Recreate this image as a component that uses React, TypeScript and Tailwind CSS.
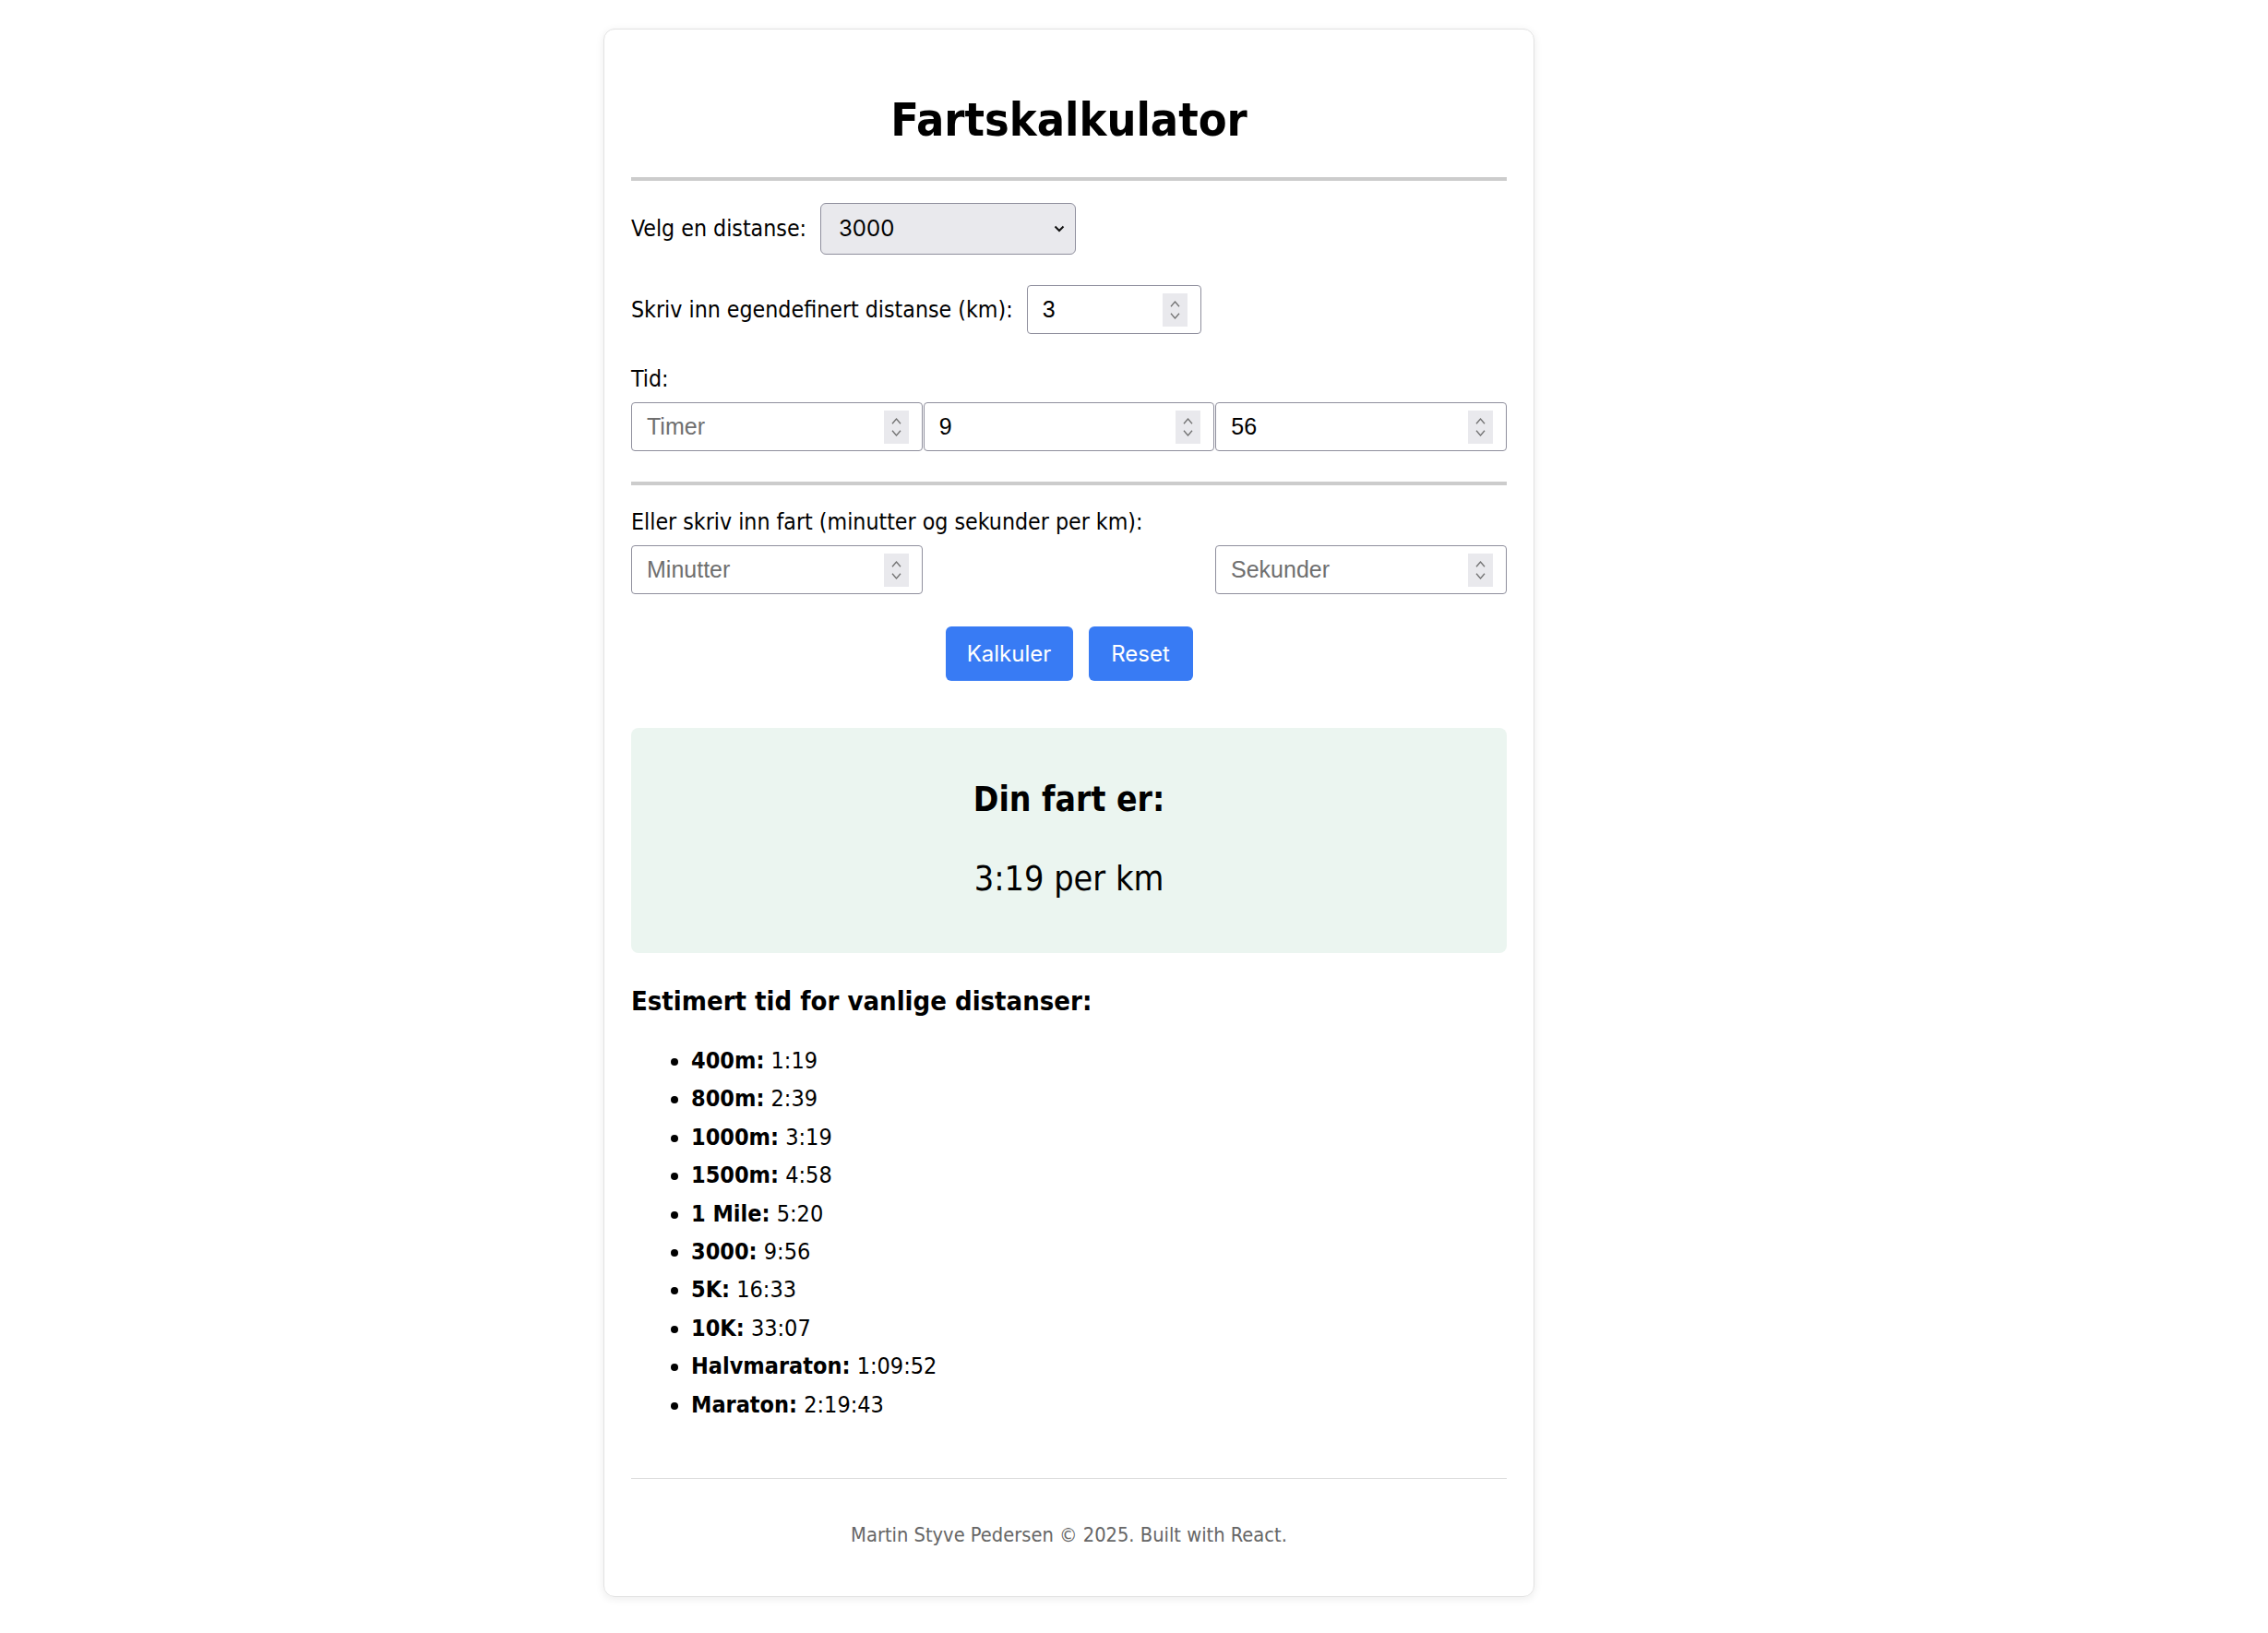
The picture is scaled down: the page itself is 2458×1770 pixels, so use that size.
import React, { FC, useState } from "react";

const results: { label: string; time: string }[] = [
  { label: "400m:", time: "1:19" },
  { label: "800m:", time: "2:39" },
  { label: "1000m:", time: "3:19" },
  { label: "1500m:", time: "4:58" },
  { label: "1 Mile:", time: "5:20" },
  { label: "3000:", time: "9:56" },
  { label: "5K:", time: "16:33" },
  { label: "10K:", time: "33:07" },
  { label: "Halvmaraton:", time: "1:09:52" },
  { label: "Maraton:", time: "2:19:43" },
];

const Spinner: FC = () => (
  <div className="w-[27px] h-[36px] bg-[#e9e9ed] flex flex-col items-center justify-center gap-[6px] shrink-0">
    <svg width="11" height="7" viewBox="0 0 11 7" fill="none">
      <path d="M1 6.2L5.5 1L10 6.2" stroke="#707070" strokeWidth="1.3" />
    </svg>
    <svg width="11" height="7" viewBox="0 0 11 7" fill="none">
      <path d="M1 0.8L5.5 6L10 0.8" stroke="#707070" strokeWidth="1.3" />
    </svg>
  </div>
);

type NumProps = {
  value: string;
  placeholder?: string;
  className?: string;
  onChange: (v: string) => void;
};

const NumberBox: FC<NumProps> = ({ value, placeholder, className, onChange }) => (
  <div
    className={
      "h-[53px] flex items-center border border-[#8f8f9d] rounded-[4px] bg-white pl-[16px] pr-[14px] " +
      (className ?? "")
    }
  >
    <input
      type="text"
      inputMode="numeric"
      value={value}
      placeholder={placeholder}
      onChange={(e) => onChange(e.target.value)}
      className="flex-1 min-w-0 outline-none bg-transparent text-[25px] text-black placeholder:text-[#6f6f6f] font-['Liberation_Sans',Arial,sans-serif]"
    />
    <Spinner />
  </div>
);

export default function App() {
  const [distance, setDistance] = useState("3000");
  const [custom, setCustom] = useState("3");
  const [hours, setHours] = useState("");
  const [minutes, setMinutes] = useState("9");
  const [seconds, setSeconds] = useState("56");
  const [paceMin, setPaceMin] = useState("");
  const [paceSec, setPaceSec] = useState("");

  return (
    <div className="min-h-screen bg-white font-['DejaVu_Sans_Condensed','DejaVu_Sans',sans-serif] text-black">
      <div className="ml-[654px] mt-[31px] w-[1009px] border border-[#e2e2e2] rounded-[12px] shadow-[0_2px_10px_rgba(0,0,0,0.08)] px-[29px] pt-[69px] pb-[52px]">
        <h1 className="text-center text-[50px] leading-[58px] font-bold">Fartskalkulator</h1>
        <div className="mt-[33px] h-[4px] bg-[#cccccc]" />

        {/* distanse */}
        <div className="mt-[24px] flex items-center gap-[15px] text-[24.7px]">
          <label>Velg en distanse:</label>
          <div className="relative w-[277px] h-[56px]">
            <select
              value={distance}
              onChange={(e) => setDistance(e.target.value)}
              className="appearance-none w-full h-full bg-[#e9e9ed] border border-[#8f8f9d] rounded-[6px] pl-[19px] text-[24px] font-['Inter',sans-serif] text-black outline-none"
            >
              <option value="400">400</option>
              <option value="800">800</option>
              <option value="1000">1000</option>
              <option value="1500">1500</option>
              <option value="3000">3000</option>
              <option value="5000">5000</option>
            </select>
            <svg
              className="absolute right-[12px] top-[24px] pointer-events-none"
              width="12"
              height="8"
              viewBox="0 0 12 8"
              fill="none"
            >
              <path d="M1.5 1.5L6 6L10.5 1.5" stroke="#111" strokeWidth="2" />
            </svg>
          </div>
        </div>

        <div className="mt-[33px] flex items-center gap-[15px] text-[24.7px]">
          <label>Skriv inn egendefinert distanse (km):</label>
          <NumberBox value={custom} onChange={setCustom} className="w-[189px]" />
        </div>

        <div className="mt-[35px] text-[24.7px] leading-[28px]">Tid:</div>
        <div className="mt-[11px] grid grid-cols-3 gap-[1px]">
          <NumberBox value={hours} placeholder="Timer" onChange={setHours} />
          <NumberBox value={minutes} onChange={setMinutes} />
          <NumberBox value={seconds} onChange={setSeconds} />
        </div>

        <div className="mt-[33px] h-[4px] bg-[#cccccc]" />

        <div className="mt-[26px] text-[24.7px] leading-[28px]">
          Eller skriv inn fart (minutter og sekunder per km):
        </div>
        <div className="mt-[11px] flex justify-between">
          <NumberBox value={paceMin} placeholder="Minutter" onChange={setPaceMin} className="w-[316px]" />
          <NumberBox value={paceSec} placeholder="Sekunder" onChange={setPaceSec} className="w-[316px]" />
        </div>

        <div className="mt-[35px] flex justify-center gap-[17px] font-['Inter',sans-serif] text-[24px] text-white">
          <button className="h-[59px] w-[138px] bg-[#387bf4] rounded-[6px]">Kalkuler</button>
          <button className="h-[59px] w-[113px] bg-[#387bf4] rounded-[6px]">Reset</button>
        </div>

        {/* resultat */}
        <div className="mt-[51px] h-[244px] bg-[#ebf5f0] rounded-[8px] pt-[56px] text-center">
          <h2 className="text-[37px] leading-[44px] font-bold">Din fart er:</h2>
          <p className="mt-[41px] text-[37.5px] leading-[44px]">3:19 per km</p>
        </div>

        <h3 className="mt-[35px] text-[29px] leading-[34px] font-bold">Estimert tid for vanlige distanser:</h3>
        <ul className="mt-[27px] list-disc pl-[65px] text-[25px]">
          {results.map((r) => (
            <li key={r.label} className="h-[41.4px] leading-[41.4px]">
              <b>{r.label}</b> {r.time}
            </li>
          ))}
        </ul>

        <div className="mt-[59px] h-[1px] bg-[#dddddd]" />
        <footer className="mt-[47px] text-center text-[21.7px] leading-[28px] text-[#666666]">
          Martin Styve Pedersen © 2025. Built with React.
        </footer>
      </div>
    </div>
  );
}
